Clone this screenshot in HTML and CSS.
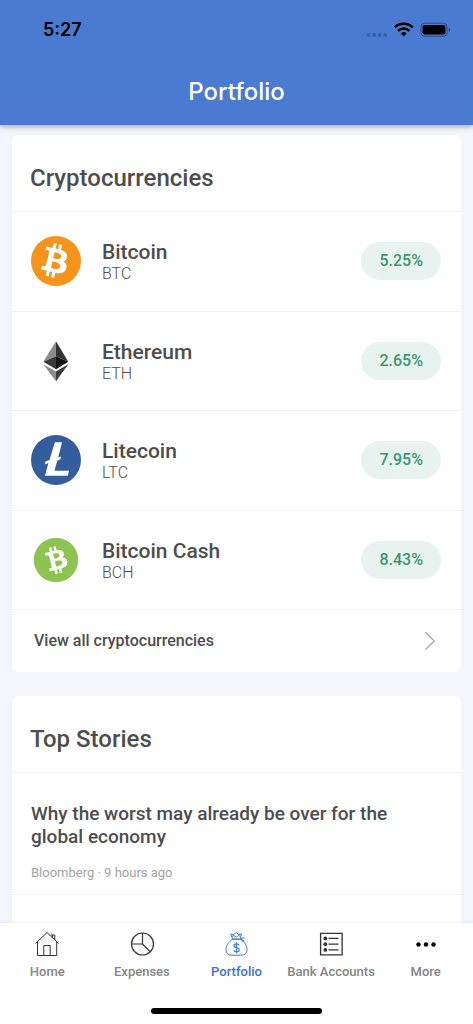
FILE: index.html
```html
<!DOCTYPE html>
<html lang="en">
<head>
<meta charset="utf-8">
<meta name="viewport" content="width=device-width, initial-scale=1">
<title>Portfolio</title>
<link rel="stylesheet" href="styles.css">
</head>
<body>
<svg class="sprite" aria-hidden="true">
  <symbol id="bitcoin-mark" viewBox="0 0 32 32"><path fill="#fff" fill-rule="evenodd" d="M23.189 14.02c.314-2.096-1.283-3.223-3.465-3.975l.708-2.84-1.728-.43-.69 2.765c-.454-.114-.92-.22-1.385-.326l.695-2.783L15.596 6l-.708 2.839c-.376-.086-.746-.17-1.104-.26l.002-.009-2.384-.595-.46 1.846s1.283.294 1.256.312c.7.175.826.638.805 1.006l-.806 3.235c.048.012.11.03.18.057l-.183-.045-1.13 4.532c-.086.212-.303.531-.793.41.018.025-1.256-.313-1.256-.313l-.858 1.978 2.25.561c.418.105.828.215 1.231.318l-.715 2.872 1.727.43.708-2.84c.472.127.93.245 1.378.357l-.706 2.828 1.728.43.715-2.866c2.948.558 5.164.333 6.097-2.333.752-2.146-.037-3.385-1.588-4.192 1.13-.26 1.98-1.003 2.207-2.538zm-3.95 5.538c-.533 2.147-4.148.986-5.32.695l.95-3.805c1.172.293 4.929.872 4.37 3.11zm.535-5.569c-.487 1.953-3.495.96-4.47.717l.86-3.45c.975.243 4.118.696 3.61 2.733z"/></symbol>
</svg>
<div class="app">
  <header class="header">
    <div class="status">
      <span class="time">5:27</span>
      <svg class="status-icons" width="86" height="18" viewBox="0 0 86 18" aria-hidden="true">
        <g fill="#000" fill-opacity=".22"><circle cx="3.500" cy="14" r="2"/><circle cx="9" cy="14" r="2"/><circle cx="14.700" cy="14" r="2"/><circle cx="20.400" cy="14" r="2"/></g>
        <g fill="none" stroke="#000" stroke-width="2.500"><path d="M29.700 6.300a13 13 0 0 1 18 0"/><path d="M33 9.900a8.200 8.200 0 0 1 11.400 0"/></g>
        <path d="M35.800 12.300a4.300 4.300 0 0 1 5.800 0l-2.900 3.300z"/>
        <rect x="56" y="2.200" width="26" height="13" rx="3.500" fill="none" stroke="#000" stroke-opacity=".4"/>
        <rect x="57.600" y="3.900" width="22.800" height="9.700" rx="2"/>
        <path d="M83.700 6.700c2 .8 2 3.400 0 4.200z" fill-opacity=".45"/>
      </svg>
    </div>
    <h1 class="page-title">Portfolio</h1>
  </header>

  <main class="content">
    <section class="card">
      <h2 class="card-title">Cryptocurrencies</h2>
      <ul class="coins">
        <li class="coin">
          <svg class="logo" viewBox="0 0 50 50" aria-hidden="true"><circle cx="25" cy="25" r="25" fill="#f7931a"/><use href="#bitcoin-mark" x="-4.500" y="-3.500" width="56" height="56"/></svg>
          <div class="coin-text"><h3 class="coin-name">Bitcoin</h3><p class="ticker">BTC</p></div>
          <span class="pill">5.25%</span>
        </li>
        <li class="coin">
          <svg class="logo" viewBox="0 0 50 50" aria-hidden="true">
            <path fill="#8c8c8c" d="M25 5.300 12.300 25.700 25 20.200z"/><path fill="#343434" d="M25 5.300 37.300 25.700 25 20.200z"/>
            <path fill="#393939" d="M12.300 25.700 25 20.200v13z"/><path fill="#141414" d="M37.300 25.700 25 20.200v13z"/>
            <path fill="#8c8c8c" d="M12.300 28.200 25 35.600v9.600z"/><path fill="#3c3c3b" d="M37.300 28.200 25 35.600v9.600z"/>
          </svg>
          <div class="coin-text"><h3 class="coin-name">Ethereum</h3><p class="ticker">ETH</p></div>
          <span class="pill">2.65%</span>
        </li>
        <li class="coin">
          <svg class="logo" viewBox="0 0 50 50" aria-hidden="true"><circle cx="25" cy="25" r="25" fill="#345d9d"/><path fill="#fff" d="M23.900 7.300H31L27.200 22.600 30.100 21.400 29.300 24.200 26.200 25.700 23.500 35.700H38L36.800 40.700H14L17.400 28 13.700 29.500 14.500 26.600 18.500 25z"/></svg>
          <div class="coin-text"><h3 class="coin-name">Litecoin</h3><p class="ticker">LTC</p></div>
          <span class="pill">7.95%</span>
        </li>
        <li class="coin">
          <svg class="logo" viewBox="0 0 50 50" aria-hidden="true"><circle cx="25" cy="25" r="22.200" fill="#8dc351"/><use href="#bitcoin-mark" x="2.500" y="2.500" width="45" height="45" transform="rotate(-28 25 25)"/></svg>
          <div class="coin-text"><h3 class="coin-name">Bitcoin Cash</h3><p class="ticker">BCH</p></div>
          <span class="pill">8.43%</span>
        </li>
      </ul>
      <a class="view-all" href="#all">View all cryptocurrencies
        <svg width="12" height="20" viewBox="0 0 12 20" fill="none" stroke="#a3a3a3" stroke-width="1.200" aria-hidden="true"><path d="m1.300 1.300 9 8.700-9 8.700"/></svg>
      </a>
    </section>

    <section class="card">
      <h2 class="card-title">Top Stories</h2>
      <article class="story">
        <h3 class="story-title">Why the worst may already be over for the global economy</h3>
        <p class="story-meta">Bloomberg · 9 hours ago</p>
      </article>
      <div class="story"></div>
    </section>
  </main>

  <nav class="tabs">
    <div class="tab-row">
      <a class="tab" href="#home">
        <svg class="tab-icon" viewBox="0 0 26 26" fill="none" stroke="#333" aria-hidden="true"><path d="M1.500 12.500 13 1.500l11.500 11M3.500 11v13.500h5.800M22.700 11v13.500h-5.800M9.800 25V14.500h6.400V25M9.300 24.500h7.600M16.800 4h4v5.200M18.600 6.700V4"/></svg>
        Home</a>
      <a class="tab" href="#expenses">
        <svg class="tab-icon" viewBox="0 0 26 26" fill="none" stroke="#333" stroke-width="1.200" aria-hidden="true"><circle cx="13.500" cy="13" r="11"/><path d="M13.500 2v11H2.500M13.500 13l7.800 7.800"/></svg>
        Expenses</a>
      <a class="tab active" href="#portfolio" aria-current="page">
        <svg class="tab-icon" viewBox="0 0 26 26" fill="none" stroke="#4077d9" stroke-linejoin="round" aria-hidden="true"><path d="M9.500 8.300C5.500 10.700 3 14.500 3 18.200c0 4 2 6 5.300 6h10.400c3.300 0 5.300-2 5.300-6 0-3.700-2.500-7.500-6.500-9.900z"/><path d="M9.500 8c-.3-2-1.200-3.500-1.800-5l3 .6L13.300 1.500l2.200 2.100 3-.6c-.5 1.500-1 3-1 5zM8.500 5.500l2.500-.9 2.300 1.600 2.200-1.600 2 .7M17.500 7.500l4-.7M17.500 8l3.700 2M17.500 7l3 4.200"/><path stroke-width="1.200" d="M16 14.300c-.3-1-1.300-1.500-2.500-1.500-3.300 0-3.300 3.500 0 3.900 3.500.4 3.500 4.100 0 4.100-1.400 0-2.500-.6-2.700-1.700M13.500 11.300v11"/></svg>
        Portfolio</a>
      <a class="tab" href="#accounts">
        <svg class="tab-icon" viewBox="0 0 26 26" fill="none" stroke="#333" stroke-width="1.300" aria-hidden="true"><path d="M2.600 2.400h21.500v21.400H2.600zM10.500 7.400h10M10.500 13.200h10M10.500 18.900h10"/><g fill="#333" stroke="none"><circle cx="7.300" cy="7.400" r="1.900"/><circle cx="7.300" cy="13.200" r="1.900"/><circle cx="7.300" cy="18.900" r="1.900"/></g></svg>
        Bank Accounts</a>
      <a class="tab" href="#more">
        <svg class="tab-icon" viewBox="0 0 26 26" aria-hidden="true"><circle cx="5.500" cy="13.500" r="2.200"/><circle cx="13" cy="13.500" r="2.200"/><circle cx="20.500" cy="13.500" r="2.200"/></svg>
        More</a>
    </div>
    <div class="home-indicator"></div>
  </nav>
</div>
</body>
</html>
```
FILE: styles.css
```css
* { box-sizing: border-box; }
body, h1, h2, h3, p, ul { margin: 0; padding: 0; }
body { font-family: Roboto, "Liberation Sans", sans-serif; color: #4d4d4d; background: #f4f5fa; }
a { color: inherit; text-decoration: none; }
.sprite { position: absolute; width: 0; height: 0; }

.app { height: 100vh; display: flex; flex-direction: column; overflow: hidden; }

.header {
  flex: none;
  position: relative;
  padding-bottom: 16px;
  background: #4a7bd0;
  box-shadow: 0 2px 5px rgba(0, 0, 0, .3);
}
.status {
  display: flex;
  align-items: center;
  justify-content: space-between;
  padding: 18px 22px 18px 43px;
}
.time { font: 600 18px/24px Inter, sans-serif; color: #000; }
.page-title { font: 500 24px/32px Inter, sans-serif; color: #fff; text-align: center; padding-bottom: 1px; margin-top: 16px; }

.content {
  flex: 1;
  min-height: 0;
  overflow: hidden;
  display: flex;
  flex-direction: column;
  gap: 24px;
  padding: 10px 12px 0;
}
.card { flex: none; background: #fff; border-radius: 6px; }
.card-title { font-size: 24px; font-weight: 500; line-height: 32px; padding: 27px 18px 17px; }

.coins { list-style: none; display: grid; grid-auto-rows: 1fr; min-height: 398px; }
.coin {
  display: flex;
  align-items: center;
  gap: 21px;
  padding: 22px 20px 22px 19px;
  border-top: 1px solid #f1f1f3;
}
.logo { width: 50px; height: 50px; }
.coin-text { flex: 1; padding-top: 2px; }
.coin-name { font-size: 21px; font-weight: 500; line-height: 24px; }
.ticker { font-size: 16px; font-weight: 300; line-height: 20px; }
.pill {
  padding: 9px 18px;
  border-radius: 20px;
  background: #e8f3ef;
  color: #3a976d;
  font-size: 16px;
  font-weight: 500;
  line-height: 20px;
}
.view-all {
  display: flex;
  align-items: center;
  justify-content: space-between;
  padding: 20px 25px 20px 22px;
  border-top: 1px solid #f1f1f3;
  font-size: 16px;
  font-weight: 500;
  line-height: 22px;
}

.story { padding: 29px 19px 12px; border-top: 1px solid #f1f1f3; }
.story-title { font-size: 19px; font-weight: 500; line-height: 23px; }
.story-meta { margin-top: 16px; font-size: 13px; line-height: 18px; color: #a3a3a3; }

.tabs { flex: none; position: relative; background: #fff; box-shadow: 0 -1px 3px rgba(0, 0, 0, .06); padding-bottom: 10px; }
.tab-row { display: grid; grid-template-columns: repeat(5, 1fr); padding: 8px 0 25px; }
.tab {
  display: flex;
  flex-direction: column;
  align-items: center;
  gap: 6px;
  color: #858585;
  font-size: 13px;
  font-weight: 500;
  line-height: 18px;
  white-space: nowrap;
}
.tab.active { color: #3a70d6; }
.tab-icon { width: 26px; height: 26px; }
.home-indicator { width: 36%; height: 6px; margin: 2px auto 0; border-radius: 3px; background: #000; }
```
